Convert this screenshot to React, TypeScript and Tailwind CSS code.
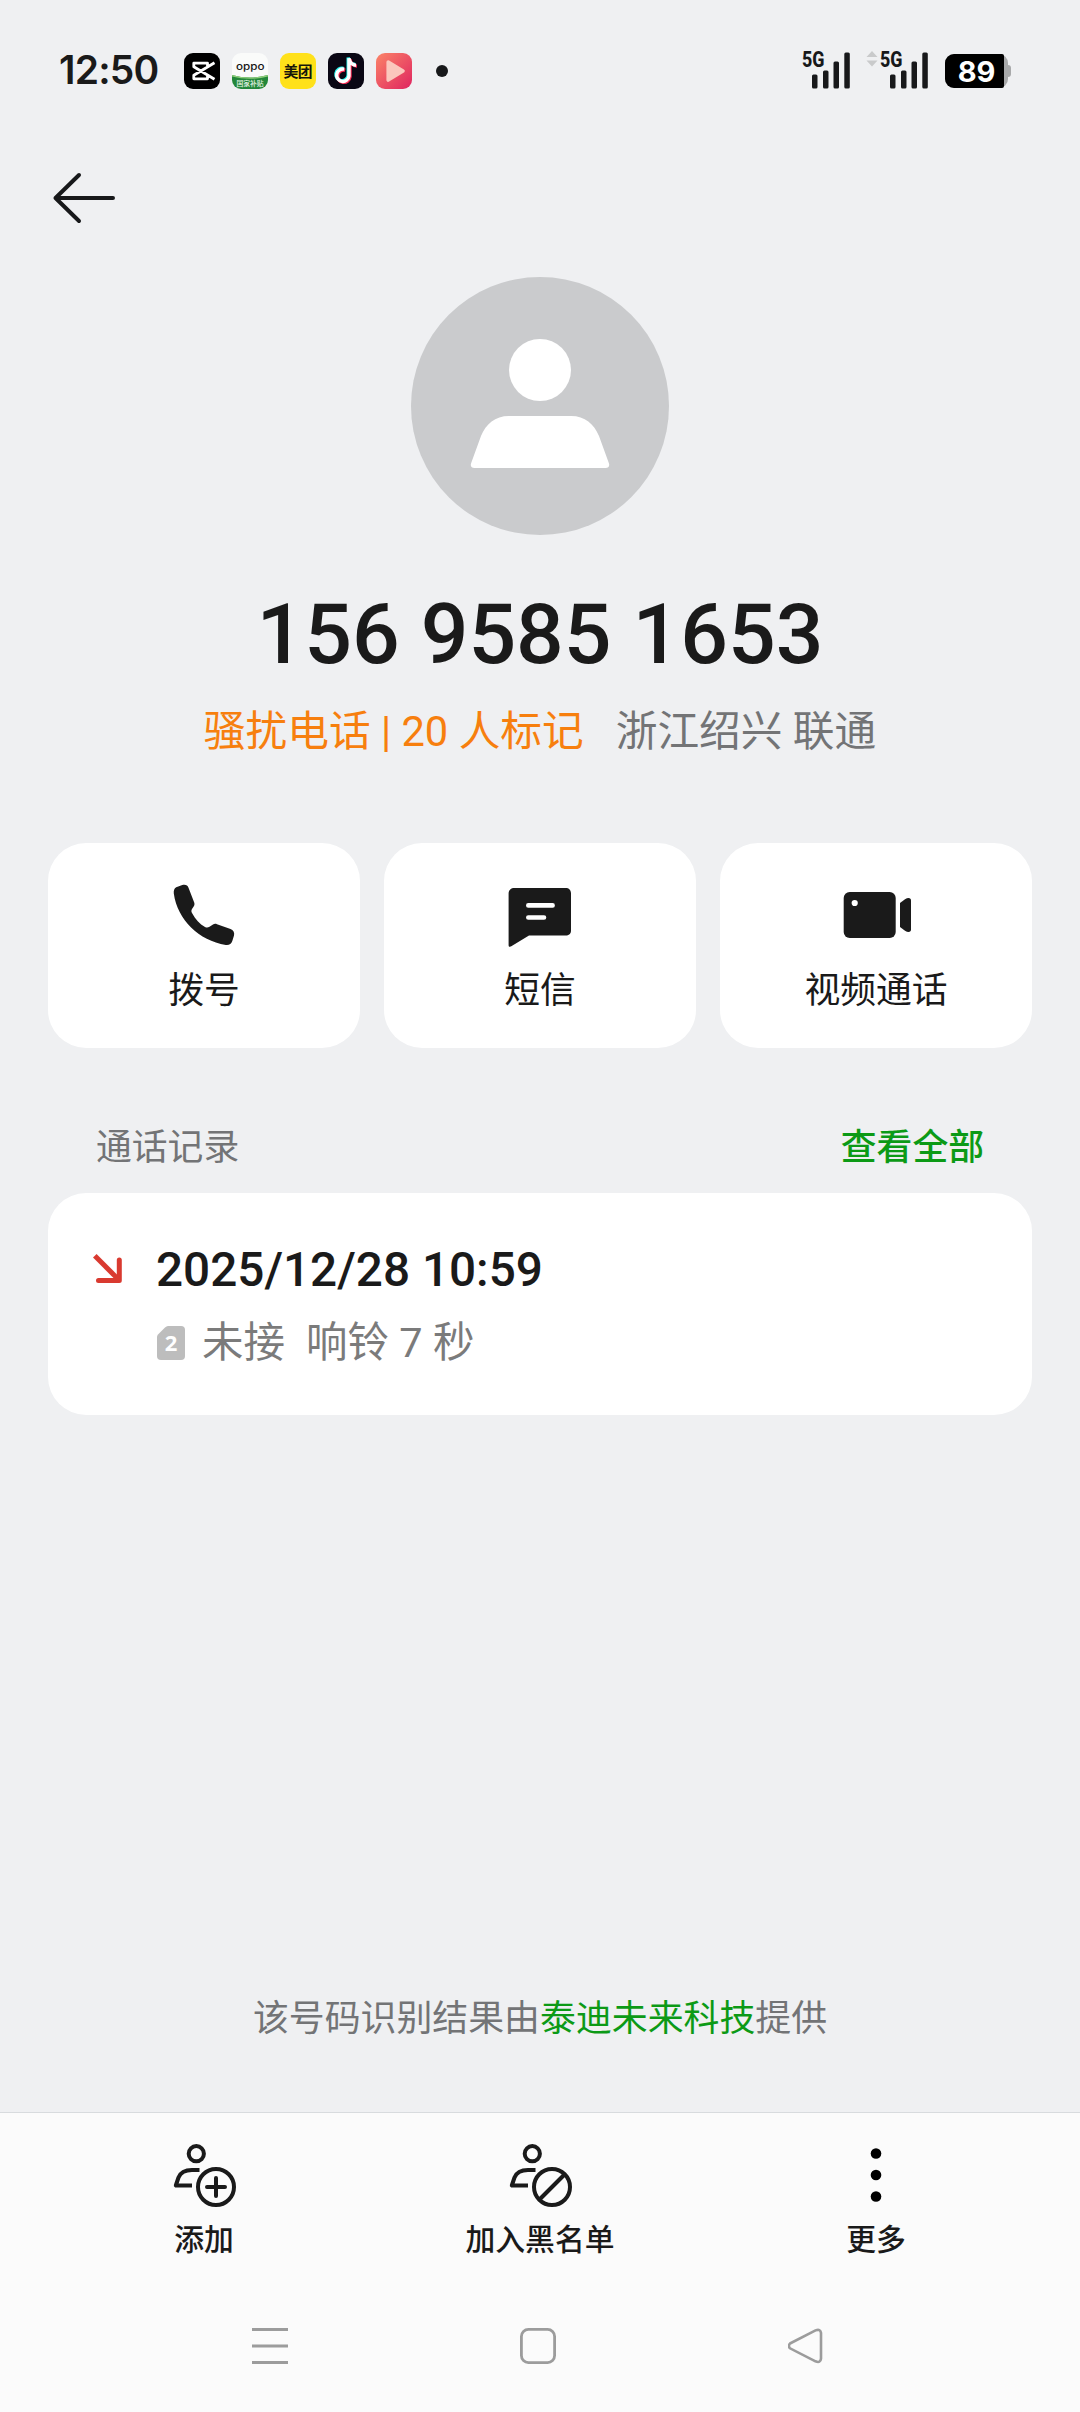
import type { ReactNode } from 'react'

const bars = [
  { x: 10, y: 22.5, h: 14 },
  { x: 21, y: 18.5, h: 18 },
  { x: 31.5, y: 9.5, h: 27 },
  { x: 42.3, y: 0.5, h: 36 },
]

function Signal() {
  return (
    <svg viewBox="0 -3 48 45" className="h-[45px] w-12 overflow-visible">
      <text x="0" y="15.3" textLength="22.5" lengthAdjust="spacingAndGlyphs" fontFamily="Roboto, sans-serif" fontWeight="800" fontSize="21.5" fill="#17181a">
        5G
      </text>
      {bars.map((bar) => (
        <rect key={bar.x} x={bar.x} y={bar.y} width="5.5" height={bar.h} rx="1.5" fill="#17181a" />
      ))}
    </svg>
  )
}

function AppIcons() {
  return (
    <div className="flex gap-3">
      <svg viewBox="0 0 36 36" className="size-9">
        <rect width="36" height="36" rx="9" fill="#000" />
        <path
          d="M30.500 9.800 9.800 22.300V25.800H23.500V22.500M30.500 26.200 9.800 13.700V10.200H23.500V13.500"
          fill="none"
          stroke="#fff"
          strokeWidth="2.800"
          strokeLinejoin="round"
        />
      </svg>
      <svg viewBox="0 0 36 36" className="size-9">
        <clipPath id="oppo">
          <rect width="36" height="36" rx="9" />
        </clipPath>
        <g clipPath="url(#oppo)">
          <rect width="36" height="36" fill="#fafbfa" />
          <path d="M0 22Q18 27 36 22V36H0Z" fill="#23873a" />
          <path d="M0 22Q18 27 36 22V23.500Q18 28 0 23.500Z" fill="#8fcf7b" />
        </g>
        <text x="4" y="17" textLength="28.500" lengthAdjust="spacingAndGlyphs" fontFamily="Inter, sans-serif" fontWeight="500" fontSize="9.500" fill="#161616">
          oppo
        </text>
        <text x="4.500" y="33" textLength="27" fontFamily="Noto Sans CJK SC, sans-serif" fontWeight="500" fontSize="6.800" fill="#e8f5e9">
          国家补贴
        </text>
      </svg>
      <svg viewBox="0 0 36 36" className="size-9">
        <rect width="36" height="36" rx="9" fill="#ffe11a" />
        <text x="3.500" y="23.500" textLength="29" fontFamily="Noto Sans CJK SC, sans-serif" fontWeight="700" fontSize="14.800" fill="#17150a">
          美团
        </text>
      </svg>
      <svg viewBox="0 0 36 36" className="size-9">
        <rect width="36" height="36" rx="9" fill="#0a0714" />
        <g fill="none" strokeWidth="3.400">
          <path d="M16.200 16.200A6.200 6.200 0 1 0 21 23V5.200C21.500 9.500 24.500 12 28 12.200" stroke="#25f4ee" transform="translate(-.8 -.8)" />
          <path d="M16.200 16.200A6.200 6.200 0 1 0 21 23V5.200C21.500 9.500 24.500 12 28 12.200" stroke="#fe2c55" transform="translate(1 .9)" />
          <path d="M16.200 16.200A6.200 6.200 0 1 0 21 23V5.200C21.500 9.500 24.500 12 28 12.200" stroke="#fff" />
        </g>
      </svg>
      <svg viewBox="0 0 36 36" className="size-9">
        <linearGradient id="play" x1="0" y1="0" x2="1" y2="1">
          <stop offset="0" stopColor="#fb8468" />
          <stop offset="1" stopColor="#df2460" />
        </linearGradient>
        <rect width="36" height="36" rx="9" fill="url(#play)" />
        <path d="M12.200 9 27 18 12.200 27Z" fill="#fbc7bd" stroke="#fbc7bd" strokeWidth="3.600" strokeLinejoin="round" />
      </svg>
    </div>
  )
}

function StatusBar() {
  return (
    <header className="flex h-[142px] items-center pl-[59px] pr-[69px]">
      <span className="w-[125px] whitespace-nowrap pb-[3px] font-[Inter,sans-serif] text-[39px] font-semibold leading-none tracking-[-0.8px]">12:50</span>
      <AppIcons />
      <span className="ml-6 size-3 rounded-full bg-[#17181a]" />
      <div className="ml-auto flex items-center">
        <Signal />
        <svg viewBox="0 0 12 16" className="-mt-[25px] ml-4 h-4 w-3" fill="#c9cacb">
          <path d="M6 0 11.500 6H.5ZM6 15.500.5 9.500H11.500Z" />
        </svg>
        <div className="ml-0.5">
          <Signal />
        </div>
        <div className="ml-[17px] flex items-center">
          <div className="h-[34px] w-[63px] rounded-[9px] bg-[#a8a9aa]">
            <div className="grid h-[34px] w-[59px] place-items-center rounded-l-[9px] rounded-r-[2px] bg-black pl-1 font-[Inter,sans-serif] text-[29px] font-bold leading-none text-white">
              89
            </div>
          </div>
          <span className="h-3 w-[3px] rounded-r-[3px] bg-[#a8a9aa]" />
        </div>
      </div>
    </header>
  )
}

function Avatar() {
  return (
    <svg viewBox="0 0 258 258" className="mt-[23px] size-[258px]">
      <circle cx="129" cy="129" r="129" fill="#cacbcd" />
      <circle cx="129" cy="93" r="31" fill="#fff" />
      <path d="M98 139H160C174 139 183 147 188 159L197.800 186C199 189 197.500 191 194.500 191H63.500C60.500 191 59 189 60.200 186L70 159C75 147 84 139 98 139Z" fill="#fff" />
    </svg>
  )
}

function ActionCard({ label, children }: { label: string; children: ReactNode }) {
  return (
    <button className="flex h-[205px] flex-1 flex-col items-center rounded-[38px] bg-white pt-9">
      <svg viewBox="0 0 72 72" className="size-[72px]" fill="#1a1a1a">
        {children}
      </svg>
      <span className="mt-4 text-[35.8px] leading-[48px]">{label}</span>
    </button>
  )
}

function ToolbarItem({ label, children }: { label: string; children: ReactNode }) {
  return (
    <button className="flex w-[336px] flex-col items-center">
      <svg viewBox="0 0 72 72" className="size-[72px]">
        {children}
      </svg>
      <span className="mt-[9px] text-[29.8px] font-medium leading-[40px]">{label}</span>
    </button>
  )
}

// shared half-hidden contact outline of the toolbar icons
function ContactOutline() {
  return (
    <g fill="none" stroke="#1a1a1a" strokeWidth="4">
      <circle cx="28.300" cy="14.700" r="7.600" />
      <path d="M31.500 31H24C17.500 31 12.500 33.500 10.500 38.500L7.800 46.500H24" strokeLinejoin="round" />
      <circle cx="48" cy="48" r="18" />
    </g>
  )
}

export default function App() {
  return (
    <div className="flex h-[2412px] w-[1080px] flex-col bg-[#eff0f2] font-[Roboto,'Noto_Sans_CJK_SC',sans-serif] text-[#1a1a1a]">
      <StatusBar />

      <div className="flex h-28 items-center pl-[50px]">
        <svg viewBox="0 0 66 54" className="h-[54px] w-[66px]" fill="none" stroke="#17181a" strokeWidth="4" strokeLinecap="round" strokeLinejoin="round">
          <path d="M63 27H5.500M29 4 5.500 27 29 50" />
        </svg>
      </div>

      <section className="flex flex-col items-center">
        <Avatar />
        <h1 className="mt-[50px] text-[84px] font-medium leading-[100px]">156 9585 1653</h1>
        <p className="mt-[17px] flex gap-8 whitespace-pre text-[41.7px] leading-[60px]">
          <span className="text-[#f77f0e]">骚扰电话 | 20 人标记</span>
          <span className="text-[#737476]">浙江绍兴 联通</span>
        </p>
      </section>

      <section className="mt-[81px] flex gap-6 px-12">
        <ActionCard label="拨号">
          <path d="M8.200 8.200 14.300 6.100C17.500 5.200 19.800 6.400 20.600 9L26.200 23.500C26.700 25 26.500 26.300 25.500 27.700L24 30C23.200 31.400 23.200 32.600 24 34C27.500 40.500 31.500 44.800 37 48C38.500 48.800 40 48.700 41.500 47.800L45 45.500C46.300 44.600 47.500 44.600 49 45.200L62.500 50C65.300 51.200 66.800 53.500 66 56.500L64.300 62C63.300 65 61 66.500 57.800 66C31 61.500 9.500 41 5.800 14.500C5.500 11.500 6.200 9.200 8.200 8.200Z" />
        </ActionCard>
        <ActionCard label="短信">
          <path d="M10.500 9H61.500C65 9 67 11 67 14.500V51.500C67 55 65 56.500 61.500 56.500H25L7.300 67.300C5.800 68.200 4.600 67.700 4.600 66.200V14.500C4.600 11 7 9 10.500 9Z" />
          <path d="M24.300 26.400H48.600M24.300 38.500H40" stroke="#fff" strokeWidth="4.600" strokeLinecap="round" />
        </ActionCard>
        <ActionCard label="视频通话">
          <rect x="3.700" y="13" width="52" height="46" rx="6" />
          <circle cx="14.700" cy="24" r="3.100" fill="#fff" />
          <path d="M60 24 65 20.200Q67 19 68.500 19C70.200 19 71 20 71 21.500V50.500C71 52 70.200 53 68.500 53Q67 53 65 51.800L60 48Z" />
        </ActionCard>
      </section>

      <section className="mt-[70px] px-12">
        <div className="flex justify-between px-12 text-[35.8px] leading-[60px]">
          <h2 className="text-[#737476]">通话记录</h2>
          <a className="font-medium text-[#0c9a16]">查看全部</a>
        </div>
        <div className="mt-[15px] flex h-[222px] rounded-[38px] bg-white pl-[45px] pt-[49px]">
          <svg viewBox="0 0 30 30" className="mt-3 size-[30px]" fill="none" stroke="#d93a30" strokeWidth="5">
            <path d="M1.800 1.800 26 26" />
            <path d="M26.300 6V26.500H5.500" strokeLinejoin="round" strokeLinecap="round" />
          </svg>
          <div className="ml-[34px]">
            <p className="-ml-px text-[47.700px] font-medium leading-[56px]">2025/12/28 10:59</p>
            <div className="mt-[15px] flex items-center whitespace-pre text-[41.500px] leading-[60px] text-[#7b7b7b]">
              <svg viewBox="0 0 28 34" className="mr-[17px] h-[34px] w-7">
                <path d="M11 0H24Q28 0 28 4V30Q28 34 24 34H4Q0 34 0 30V11Q0 9.500 1 8.500L8 1.500Q9.500 0 11 0Z" fill="#bdbdbd" />
                <text x="14" y="24.500" textAnchor="middle" fontFamily="Open Sans, sans-serif" fontWeight="700" fontSize="22" fill="#fff">
                  2
                </text>
              </svg>
              <span>未接</span>
              <span className="ml-[21px]">响铃 7 秒</span>
            </div>
          </div>
        </div>
      </section>

      <p className="mt-auto mb-[63px] text-center text-[35.900px] leading-[60px] text-[#737476]">
        该号码识别结果由<span className="text-[#0c9a16]">泰迪未来科技</span>提供
      </p>

      <footer className="flex h-[300px] shrink-0 flex-col border-t border-[#d8dbde] bg-[#fbfbfb]">
        <nav className="flex justify-center pt-[26px]">
          <ToolbarItem label="添加">
            <ContactOutline />
            <path d="M48 39V57M39 48H57" stroke="#1a1a1a" strokeWidth="4" strokeLinecap="round" />
          </ToolbarItem>
          <ToolbarItem label="加入黑名单">
            <ContactOutline />
            <path d="M35.500 60.500 60.500 35.500" stroke="#1a1a1a" strokeWidth="4" />
          </ToolbarItem>
          <ToolbarItem label="更多">
            <circle cx="36" cy="14.500" r="5.300" />
            <circle cx="36" cy="36" r="5.300" />
            <circle cx="36" cy="57.500" r="5.300" />
          </ToolbarItem>
        </nav>
        <div className="mt-[68px] flex justify-between pl-[252px] pr-[256px]">
          <svg viewBox="0 0 36 36" className="size-9" stroke="#9c9c9c" strokeWidth="3">
            <path d="M0 1.500H36M0 18H36M0 34.500H36" />
          </svg>
          <svg viewBox="0 0 36 36" className="size-9" fill="none" stroke="#9c9c9c" strokeWidth="2.800">
            <rect x="1.400" y="1.400" width="33.200" height="33.200" rx="7" />
          </svg>
          <svg viewBox="0 0 36 36" className="size-9" fill="none" stroke="#9c9c9c" strokeWidth="2.600">
            <path d="M2 15.500 27.500 2.400Q32.500.5 33 5V30.500Q32.500 35.500 27.500 33.300L2 20.300Q-.2 18 2 15.500Z" />
          </svg>
        </div>
      </footer>
    </div>
  )
}
